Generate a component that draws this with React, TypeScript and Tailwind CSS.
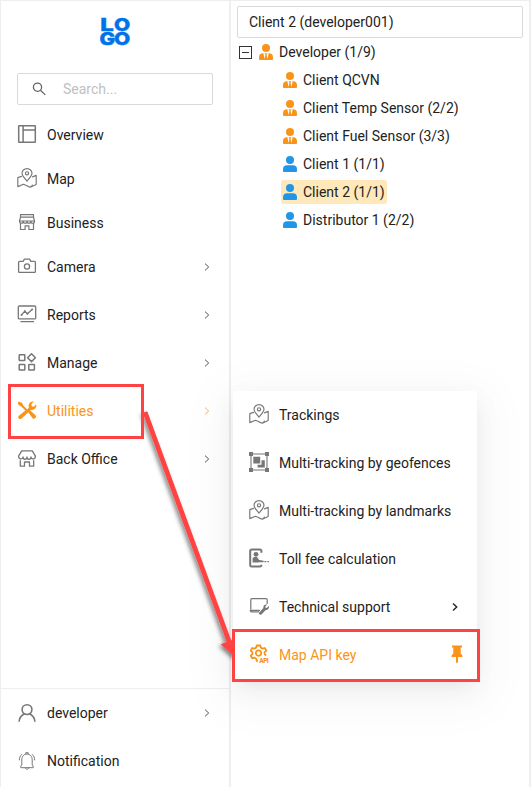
import React from "react";

type IconProps = { className?: string };
type IconType = (p: IconProps) => React.ReactElement;

const line = {
  fill: "none",
  stroke: "currentColor",
  strokeWidth: 1.4,
  strokeLinecap: "round" as const,
  strokeLinejoin: "round" as const,
};

const OverviewIcon: IconType = () => (
  <svg width="20" height="20" viewBox="0 0 20 20" {...line} strokeWidth={1.5}>
    <rect x="1.7" y="1.7" width="16.6" height="16.6" rx="0.5" />
    <path d="M6.1 2v16M6.100 6.1H18" />
  </svg>
);

const MapIcon: IconType = () => (
  <svg width="20" height="20" viewBox="0 0 20 20" {...line} strokeWidth={1.15}>
    <path d="M10 13.2C7.2 9.8 5 7.600 5 5.300a5 4.700 0 0 1 10 0c0 2.300-2.200 4.500-5 7.900z" />
    <circle cx="10" cy="5.300" r="1.600" />
    <path d="M4.600 8.400L.8 9.600v9l5.700-2.300c2 .5 4.400 2.500 6.800 2.900l5.900-2.800V7.400l-3.700 1.500M13.300 19c1-.6 1.600-.9 2-1.900" />
  </svg>
);

const BusinessIcon: IconType = () => (
  <svg width="20" height="20" viewBox="0 -0.7 20 20" {...line} strokeWidth={1.2}>
    <path d="M3.500 4.500V2h13v2.500M3.500 4.500h13l1 3.800h-15zM2.500 8.300c0 3 3.700 3 3.700 0 0 3 3.800 3 3.800 0 0 3 3.800 3 3.800 0 0 3 3.700 3 3.700 0M3.500 10.800V16.800h4.600v-3.600h3.800v3.600h4.600v-6" />
  </svg>
);

const CameraIcon: IconType = () => (
  <svg width="20" height="20" viewBox="0 -1 20 20" {...line} strokeWidth={1.3}>
    <path d="M2.500 4.300h3.600l1.300-2.200h5.200l1.300 2.200h3.600c.6 0 .9.300.9.900v9.300c0 .6-.3.900-.9.900h-15c-.6 0-.9-.3-.9-.9V5.200c0-.6.3-.9.900-.9z" />
    <circle cx="10" cy="9.500" r="2.600" />
  </svg>
);

const ReportsIcon: IconType = () => (
  <svg width="20" height="20" viewBox="0 0 20 20" {...line} strokeWidth={1.3}>
    <rect x="1.300" y="2" width="17.400" height="12.900" rx="1" />
    <path d="M4.500 10.900l3.300-3.700 2.600 2.500 4.700-4.300M4 17.700h12.500" />
    <path d="M4.500 10.900h.1M7.800 7.200h.1M10.400 9.700h.1M15.100 5.400h.1" strokeWidth="1.9" />
  </svg>
);

const ManageIcon: IconType = () => (
  <svg width="20" height="20" viewBox="0 -0.500 20 20" {...line} strokeWidth={1.5}>
    <rect x="2.200" y="2.300" width="5.600" height="5.600" rx=".5" />
    <rect x="2.200" y="11.900" width="5.600" height="5.600" rx=".5" />
    <rect x="11.800" y="11.900" width="5.600" height="5.600" rx=".5" />
    <path d="M14.500 1.300l3.900 3.900-3.900 3.900-3.900-3.900z" />
  </svg>
);

const ToolsIcon: IconType = () => (
  <svg width="20" height="20" viewBox="0 0 20 20" fill="currentColor">
    <path d="M1.900 1.600l3.200 1.400 1.200 2.600 3.900 3.900 1.700-1.700c-.7-2-.1-4.300 1.500-5.500 1-.7 2.300-1 3.500-.7L14.300 4.300l.5 2 2 .5 2.400-2.500c.7 3.300-1.900 6.100-5.400 5.600L4.700 18.400c-.8.900-2.200.9-3 .1-.8-.8-.6-2 .2-2.700l6.500-5.400-4.200-3.900-2.500-1.500L.6 3z" />
    <path d="M11 11.900l1.900-1.600 5.600 4.900c1.700 1.900-.9 4.700-2.900 3z" />
  </svg>
);

const StoreIcon: IconType = () => (
  <svg width="20" height="20" viewBox="0 -0.900 20 20" {...line} strokeWidth={1.3}>
    <path d="M4.700 2h10.600l3.100 5.300c0 3.300-4.200 3.600-4.400.8-.3 3-3.900 3-4 0-.2 3-3.800 3-4 0-.2 2.900-4.400 2.400-4.400-.8zM3.300 11.800v5.500H7.500v-4.200h5v4.200h4.200v-5.500" />
  </svg>
);

const PersonIcon: IconType = () => (
  <svg width="20" height="20" viewBox="0 -1 20 20" {...line} strokeWidth={1.6} strokeLinecap="butt">
    <circle cx="10" cy="6.600" r="4.900" />
    <path d="M2.100 18.800c.2-3.500 1.900-6.300 5.200-8.100M17.900 18.800c-.2-3.500-1.900-6.300-5.200-8.100" />
  </svg>
);

const BellIcon: IconType = () => (
  <svg width="20" height="20" viewBox="0 -1 20 20" {...line} strokeWidth={1}>
    <path d="M8.800 2.900V1.700h2.400v1.200M3.800 16.300V15l1-1V9c0-8 10.400-8 10.400 0v5l1 1v1.300zM8.100 16.700c.2 2.100 3.600 2.100 3.800 0M4.700 3.500C3.200 4.900 2.300 6.700 2.300 8.900M15.300 3.500c1.500 1.400 2.400 3.200 2.400 5.400" />
  </svg>
);

const GeofenceIcon: IconType = () => (
  <svg width="20" height="20" viewBox="0 0 20 20" fill="currentColor">
    <path d="M2 2h16v16H2z" fill="none" stroke="currentColor" strokeWidth="1.100" />
    <path d="M0 0h4v4H0zM16 0h4v4h-4zM0 16h4v4H0zM16 16h4v4h-4zM4.300 4.700h6.900v6.800H4.300zM12.500 8.300h3.300v7.200H8.600v-2.700h3.900z" />
  </svg>
);

const TollIcon: IconType = () => (
  <svg width="20" height="20" viewBox="0 0 20 20" fill="currentColor">
    <path d="M12.400 4.800V3c0-1-.5-1.600-1.500-1.600H2.700c-.9 0-1.500.5-1.500 1.500v14c0 .9.600 1.500 1.500 1.500h8.200c1 0 1.500-.6 1.500-1.600" fill="none" stroke="currentColor" strokeWidth="2" />
    <circle cx="7" cy="6.300" r="2.400" />
    <path d="M3.600 14.600V11c0-1.200.9-1.900 2-1.900h2.400l2.200 2.800 4.400.8v1.500H10l-.8.400zM15.400 12.900h2v1.300h-2zM18.400 12.900H20v1.300h-1.600z" />
  </svg>
);

const SupportIcon: IconType = () => (
  <svg width="20" height="20" viewBox="0 0 20 20" fill="currentColor">
    <path d="M1.800 13.400V3.700c0-.7.300-1 1-1h14.400c.7 0 1 .3 1 1v4.200M1 14.300h10M1 14.300c.2 1.100.8 1.500 1.700 1.500H10" fill="none" stroke="currentColor" strokeWidth="1.200" />
    <path d="M19.800 10.100l-2 2-1.200-.3-.3-1.300 1.900-1.900c-2.300-.7-4.300 1-3.800 3.300l-4.200 4.500c-1.100 1.400.8 3.200 2.200 2l4.400-4.500c2.100.4 3.800-1.500 3-3.800z" />
  </svg>
);

const ApiIcon: IconType = () => (
  <svg width="20" height="20" viewBox="0 0 20 20" fill="none" stroke="currentColor" strokeLinejoin="round">
    <path d="M9 16.800H7.700L7.200 14.700 5.400 13.700l-2.200.6-1.500-2.600 1.700-1.500V8.200L1.700 6.600l1.500-2.600 2.200.6 1.800-1 .5-2.100h3.600l.5 2.100 1.800 1 2.200-.6 1.500 2.600-1.700 1.600v2l1.500 1.400" strokeWidth="1.800" />
    <circle cx="9.500" cy="9.100" r="2.700" strokeWidth="1.700" />
    <text x="10.300" y="19" fontSize="6.500" fontFamily="Roboto, sans-serif" fontWeight="900" fill="currentColor" stroke="none" textLength="9.500">API</text>
  </svg>
);

const Chevron = ({ className = "" }: IconProps) => (
  <svg className={className} width="6" height="8" viewBox="0 0 6 8" fill="none" stroke="currentColor" strokeWidth="1">
    <path d="M1 .6L4.700 4 1 7.400" />
  </svg>
);

const Pin = () => (
  <svg width="12" height="19" viewBox="0 0 12 19" fill="#fa9419">
    <path d="M1 .5h10v2H9.700v6.200c1.300.5 1.800 1.600 1.800 3.200H7v5l-1 1.600-1-1.600v-5H.5c0-1.600.5-2.700 1.800-3.200V2.500H1z" />
  </svg>
);

const UserGlyph = ({ manager }: { manager: boolean }) => (
  <svg width="14" height="16" viewBox="0 0 14 16" fill={manager ? "#fa9419" : "#2196e8"}>
    <circle cx="7" cy="4" r="4" />
    <path d="M4 9.300h6c2.500 0 4 1.600 4 4v1.500c0 .8-.4 1.200-1.200 1.200H1.200C.4 16 0 15.600 0 14.800v-1.500c0-2.400 1.500-4 4-4z" />
    {manager && <path d="M4.300 9.200h1.500l.6 1.300L5.700 15zM9.700 9.200H8.200l-.6 1.300.7 4.500z" fill="#fff" />}
  </svg>
);

type Item = { label: string; icon: IconType; arrow?: boolean; active?: boolean; gap?: string; arrowTone?: string };

const mainItems: Item[] = [
  { label: "Overview", icon: OverviewIcon, gap: "mb-1" },
  { label: "Map", icon: MapIcon, gap: "mb-1" },
  { label: "Business", icon: BusinessIcon, gap: "mb-1" },
  { label: "Camera", icon: CameraIcon, arrow: true },
  { label: "Reports", icon: ReportsIcon, arrow: true },
  { label: "Manage", icon: ManageIcon, arrow: true },
  { label: "Utilities", icon: ToolsIcon, arrow: true, active: true, arrowTone: "opacity-70" },
  { label: "Back Office", icon: StoreIcon, arrow: true },
];

const footerItems: Item[] = [
  { label: "developer", icon: PersonIcon, arrow: true },
  { label: "Notification", icon: BellIcon },
];

const popupItems: Item[] = [
  { label: "Trackings", icon: MapIcon },
  { label: "Multi-tracking by geofences", icon: GeofenceIcon },
  { label: "Multi-tracking by landmarks", icon: MapIcon },
  { label: "Toll fee calculation", icon: TollIcon },
  { label: "Technical support", icon: SupportIcon, arrow: true, arrowTone: "stroke-[1.4] text-[#222]" },
  { label: "Map API key", icon: ApiIcon, active: true },
];

function MenuRow({ item }: { item: Item }) {
  const Icon = item.icon;
  return (
    <div className={`flex h-10 items-center pl-4 pr-[19px] ${item.gap ?? "mb-2"} ${item.active ? "text-[#fa9419]" : "text-[#222]"}`}>
      <span className={`mb-[2px] mr-[10px] ${item.active ? "" : "text-[#777]"}`}><Icon /></span>
      <span className="flex-1">{item.label}</span>
      {item.arrow && <Chevron className={item.arrowTone ?? "text-[#555]"} />}
    </div>
  );
}

const clients = [
  { label: "Client QCVN", manager: true },
  { label: "Client Temp Sensor (2/2)", manager: true },
  { label: "Client Fuel Sensor (3/3)", manager: true },
  { label: "Client 1 (1/1)", manager: false },
  { label: "Client 2 (1/1)", manager: false, selected: true },
  { label: "Distributor 1 (2/2)", manager: false },
];

export default function App() {
  return (
    <div className="relative flex h-[787px] w-[531px] overflow-hidden border-l border-t border-[#eee] bg-white font-['Roboto',sans-serif] text-sm text-[#222]">
      <aside className="flex w-[230px] shrink-0 flex-col border-r-2 border-[#eee]">
        <div className="flex h-[72px] justify-center pt-[15px]">
          <svg className="overflow-visible" width="30" height="31" viewBox="0 0 30 31" fill="#0073e6" stroke="#0073e6" strokeWidth="0.500" fontFamily="Inter, sans-serif" fontWeight="800" fontSize="18">
            <text x="0.200" y="14.500" textLength="13.500" lengthAdjust="spacingAndGlyphs">L</text>
            <text x="14" y="14.500" textLength="16.200" lengthAdjust="spacingAndGlyphs">O</text>
            <text x="-0.500" y="29.400" textLength="15.600" lengthAdjust="spacingAndGlyphs">G</text>
            <text x="14" y="29.400" textLength="16.200" lengthAdjust="spacingAndGlyphs">O</text>
          </svg>
        </div>
        <div className="ml-4 flex h-8 w-[196px] items-center rounded-xs border border-[#d9d9d9] pl-[14px] text-[#bfbfbf]">
          <svg className="mr-[17px] text-[#666]" width="14" height="14" viewBox="0 0 14 14" fill="none" stroke="currentColor" strokeWidth="1.300">
            <circle cx="5.500" cy="5.200" r="4.100" />
            <path d="M8.400 8.200l4.900 4.700" />
          </svg>
          Search...
        </div>
        <nav className="flex-1 pt-[10px]">
          {mainItems.map((item) => <MenuRow key={item.label} item={item} />)}
        </nav>
        <div className="h-[99px] border-t border-[#eee] pt-1">
          {footerItems.map((item) => <MenuRow key={item.label} item={item} />)}
        </div>
      </aside>

      <main className="w-[300px] shrink-0 border-r-2 border-[#eee] pl-[6px] pt-[5px]">
        <div className="flex h-8 w-[286px] items-center rounded-xs border border-[#d9d9d9] pl-[11px]">Client 2 (developer001)</div>
        <div className="flex h-7 items-center pl-[2px]">
          <span className="mr-[7px] mt-px flex h-[13px] w-[13px] items-center justify-center border border-[#333]"><i className="h-px w-[7px] bg-[#333]" /></span>
          <UserGlyph manager />
          <span className="ml-[6px]">Developer (1/9)</span>
        </div>
        {clients.map((c) => (
          <div key={c.label} className="flex h-7 items-center pl-[44px]">
            <div className={`flex h-6 items-center rounded-xs px-[2px] ${c.selected ? "bg-[#ffe8ba]" : ""}`}>
              <UserGlyph manager={c.manager} />
              <span className="ml-[6px]">{c.label}</span>
            </div>
          </div>
        ))}
      </main>

      <section className="absolute left-[232px] top-[390px] h-[289px] w-[244px] rounded-xs bg-white pt-1 shadow-[0_6px_16px_-8px_rgba(0,0,0,0.08),0_9px_28px_0_rgba(0,0,0,0.05),0_12px_48px_16px_rgba(0,0,0,0.03)]">
        {popupItems.map((item) => <MenuRow key={item.label} item={item} />)}
        <div className="absolute left-[218px] top-[254px]"><Pin /></div>
      </section>

      <svg className="absolute -left-px -top-px" width="531" height="787" viewBox="0 0 531 787">
        <defs>
          <clipPath id="arrow-area"><path d="M0 0H235V787H0z" /></clipPath>
          <filter id="arrow-shadow" x="-20%" y="-10%" width="140%" height="120%">
            <feDropShadow dx="-2" dy="2" stdDeviation="2" floodColor="#000" floodOpacity=".5" />
          </filter>
        </defs>
        <g clipPath="url(#arrow-area)">
          <g filter="url(#arrow-shadow)" fill="#ff4343">
            <path d="M145 412L230 644" stroke="#ff4343" strokeWidth="4.800" />
            <path d="M236 658L220.700 644.300L239 637.500z" />
          </g>
        </g>
        <g fill="none" stroke="#ff4343" strokeWidth="3">
          <rect x="9.500" y="385.500" width="133" height="52" />
          <rect x="233.500" y="630.500" width="245" height="50" />
        </g>
      </svg>
    </div>
  );
}
